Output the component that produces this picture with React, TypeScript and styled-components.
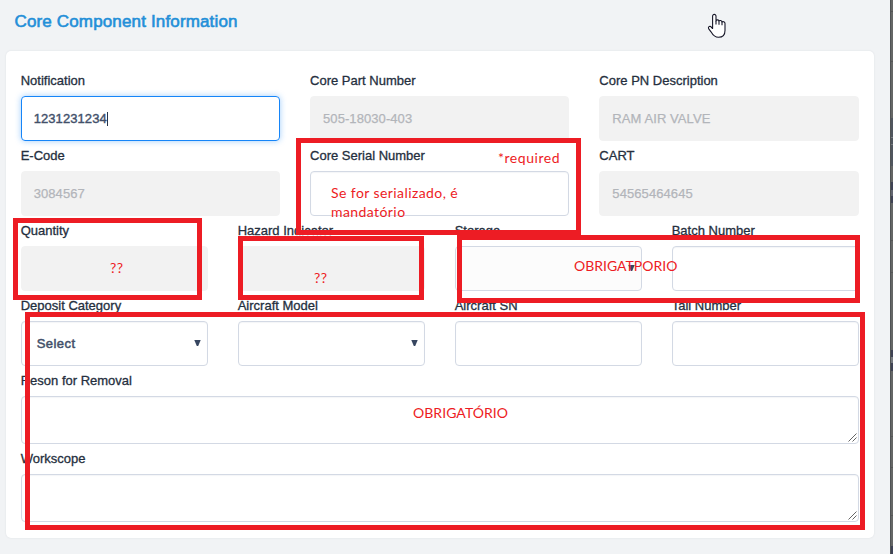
import React from 'react';
import styled, { createGlobalStyle, css } from 'styled-components';

const GlobalStyle = createGlobalStyle`
  * { box-sizing: border-box; }
  body { margin: 0; overflow: hidden; background: #f1f3f5; }
`;

const Page = styled.div`
  position: relative;
  display: flex;
  width: 893px;
  height: 554px;
  overflow: hidden;
  background: #f1f3f5;
  font-family: 'Liberation Sans', Arial, sans-serif;
`;

const Main = styled.main`
  display: flex;
  flex-direction: column;
  flex: 1;
  padding: 0 16px 16px 6px;
`;

const Title = styled.h1`
  flex: none;
  height: 51px;
  margin: 0;
  padding: 11px 0 0 8.5px;
  font-size: 17px;
  line-height: 21px;
  font-weight: 400;
  letter-spacing: 0.15px;
  color: #238fd8;
  -webkit-text-stroke: 0.6px #238fd8;
`;

const Card = styled.form`
  display: flex;
  flex: 1;
  flex-direction: column;
  gap: 6px;
  padding: 21px 15.3px 0 14.7px;
  border-radius: 5px;
  background: #fff;
  box-shadow: 0 0 2px rgba(30, 50, 70, 0.1);
`;

const Row = styled.div<{ $columns: number }>`
  display: grid;
  grid-template-columns: repeat(${(p) => p.$columns}, 1fr);
  column-gap: 30px;
`;

const Field = styled.label`
  display: flex;
  flex-direction: column;
`;

const Label = styled.span`
  height: 24px;
  font-size: 13px;
  line-height: 18px;
  letter-spacing: 0;
  white-space: nowrap;
  color: #252f3e;
  -webkit-text-stroke: 0.3px #252f3e;
`;

type Kind = 'plain' | 'disabled' | 'focused' | 'tinted';

const kinds = {
  plain: css`
    background: #fff;
    box-shadow: inset 0 1px 1px rgba(40, 60, 90, 0.05);
  `,
  tinted: css`
    background: #fcfcfc;
  `,
  disabled: css`
    border-color: #f2f2f2;
    background: #f2f2f2;
    color: #b2b5ba;
    -webkit-text-stroke: 0.25px #b2b5ba;
  `,
  focused: css`
    border-color: #1685f8;
    box-shadow: 0 0 6px rgba(22, 133, 248, 0.4);
  `,
};

const Control = styled.div<{ $kind: Kind; $select: boolean }>`
  display: flex;
  align-items: center;
  height: 45px;
  padding: 0 6px 0 ${(p) => (p.$select ? 15 : 12)}px;
  border: 1px solid #d3d9e4;
  border-radius: 4px;
  font-size: 13px;
  letter-spacing: 0.08px;
  color: #42506a;
  -webkit-text-stroke: 0.4px #42506a;
  ${(p) => kinds[p.$kind]}
`;

const SelectText = styled.span`
  flex: 1;
  letter-spacing: 0.45px;
  -webkit-text-stroke-width: 0.5px;
`;

const Caret = styled.span`
  width: 1px;
  height: 14px;
  background: #26344a;
`;

const Arrow = styled.svg`
  width: 7px;
  height: 6px;
  margin-bottom: 2px;
`;

const TextArea = styled.div`
  display: flex;
  align-items: flex-end;
  justify-content: flex-end;
  height: 48px;
  padding: 0 1px 1px 0;
  border: 1px solid #d3d9e4;
  border-radius: 4px;
  box-shadow: inset 0 1px 1px rgba(40, 60, 90, 0.05);
`;

const Grip = () => (
  <svg width="9" height="9" viewBox="0 0 9 9" stroke="#555" strokeWidth="0.9">
    <path d="M0.5 8.5 8.5 0.5M4.5 8.5 8.5 4.5" />
  </svg>
);

/* Sliver of the dimmed page behind the panel. */
const Backdrop = styled.aside`
  display: flex;
  flex-direction: column;
  width: 3px;
  overflow: hidden;
  border-left: 1px solid #505355;
  background: #636564;
`;

const Band = styled.div<{ $h: number; $c: string }>`
  flex: none;
  height: ${(p) => p.$h}px;
  background: ${(p) => p.$c};
`;

const bands: [number, string][] = [
  [11, '#656766'], [1, '#535555'], [49, '#656766'], [1, '#555757'],
  [56, '#656766'], [19, '#50565e'], [1, '#777b80'], [6, '#50565e'], [1, '#777b80'], [21, '#50565e'],
  [16, '#646564'], [8, '#3f4354'], [6, '#62656f'], [7, '#3f4354'],
  [37, '#656766'], [1, '#555757'], [31, '#656766'], [1, '#555757'],
  [77, '#656766'], [7, '#3f4354'], [6, '#777b80'], [8, '#3f4354'],
  [65, '#656766'], [1, '#555757'], [30, '#656766'], [1, '#555757'],
  [47, '#656766'], [1, '#555757'], [30, '#656766'], [8, '#3f4354'],
];

/* Free-form review markup drawn over the form. */
const MarkBox = styled.div<{ $x: number; $y: number; $w: number; $h: number }>`
  position: absolute;
  left: ${(p) => p.$x}px;
  top: ${(p) => p.$y}px;
  width: ${(p) => p.$w}px;
  height: ${(p) => p.$h}px;
  border: 5px solid #ed1c24;
`;

const Note = styled.div<{ $x: number; $y: number; $track: number }>`
  position: absolute;
  left: ${(p) => p.$x}px;
  top: ${(p) => p.$y}px;
  font-family: Lato, 'Open Sans', sans-serif;
  font-size: 14px;
  letter-spacing: ${(p) => p.$track}px;
  line-height: 19px;
  white-space: pre;
  color: #ed1c24;
`;

const Pointer = styled.svg`
  position: absolute;
  left: 707px;
  top: 13px;
  width: 20px;
  height: 26px;
`;

type FieldData = { label: string; value?: string; kind?: Kind; select?: boolean };

const rows: FieldData[][] = [
  [
    { label: 'Notification', value: '1231231234', kind: 'focused' },
    { label: 'Core Part Number', value: '505-18030-403', kind: 'disabled' },
    { label: 'Core PN Description', value: 'RAM AIR VALVE', kind: 'disabled' },
  ],
  [
    { label: 'E-Code', value: '3084567', kind: 'disabled' },
    { label: 'Core Serial Number' },
    { label: 'CART', value: '54565464645', kind: 'disabled' },
  ],
  [
    { label: 'Quantity', kind: 'disabled' },
    { label: 'Hazard Indicator', kind: 'disabled' },
    { label: 'Storage', kind: 'tinted', select: true },
    { label: 'Batch Number' },
  ],
  [
    { label: 'Deposit Category', value: 'Select', select: true },
    { label: 'Aircraft Model', select: true },
    { label: 'Aircraft SN' },
    { label: 'Tail Number' },
  ],
];

const boxes = [
  { x: 13, y: 218, w: 189, h: 82 },
  { x: 238, y: 236, w: 186, h: 64 },
  { x: 296, y: 138, w: 285, h: 97 },
  { x: 457, y: 235, w: 403, h: 68 },
  { x: 25, y: 312, w: 840, h: 218 },
];

const notes = [
  { x: 498, y: 148, text: '*required', track: 0.55 },
  { x: 331, y: 183, text: 'Se for serializado, é\nmandatório', track: 0.42 },
  { x: 110, y: 258, text: '??', track: 0.6 },
  { x: 314, y: 268, text: '??', track: 0.6 },
  { x: 574, y: 256, text: 'OBRIGATPORIO', track: 0 },
  { x: 413, y: 403, text: 'OBRIGATÓRIO', track: 0.05 },
];

const FormField = ({ label, value, kind = 'plain', select = false }: FieldData) => (
  <Field>
    <Label>{label}</Label>
    <Control $kind={kind} $select={select}>
      {select ? <SelectText>{value}</SelectText> : value}
      {kind === 'focused' && <Caret />}
      {select && (
        <Arrow viewBox="0 0 7 6">
          <path d="M0.3 0H6.7L4.2 6H2.8Z" fill="#374660" />
        </Arrow>
      )}
    </Control>
  </Field>
);

export default function App() {
  return (
    <Page>
      <GlobalStyle />
      <Main>
        <Title>Core Component Information</Title>
        <Card>
          {rows.map((fields, i) => (
            <Row key={i} $columns={fields.length}>
              {fields.map((f) => (
                <FormField key={f.label} {...f} />
              ))}
            </Row>
          ))}
          {['Reson for Removal', 'Workscope'].map((label) => (
            <Field key={label}>
              <Label>{label}</Label>
              <TextArea>
                <Grip />
              </TextArea>
            </Field>
          ))}
        </Card>
      </Main>
      <Backdrop>
        {bands.map(([h, c], i) => (
          <Band key={i} $h={h} $c={c} />
        ))}
      </Backdrop>

      {boxes.map((b, i) => (
        <MarkBox key={i} $x={b.x} $y={b.y} $w={b.w} $h={b.h} />
      ))}
      {notes.map((n, i) => (
        <Note key={i} $x={n.x} $y={n.y} $track={n.track}>
          {n.text}
        </Note>
      ))}

      <Pointer viewBox="0 0 20 26">
        <path
          d="M5.6 15.5V3.2C5.6 0.8 9 0.8 9 3.2V8C9.2 6.4 12 6.6 12 8.2C12.3 7 15 7.2 15 9.2C15.6 8.2 18 8.6 18 10.6V17.5C18 21.5 15.6 24.3 11.5 24.3C7.3 24.3 5.4 21.3 4 18.8L1.6 15.6C0.8 13.7 3.1 12.6 4.2 14Z"
          fill="#fff"
          stroke="#171728"
          strokeWidth="1.1"
          strokeLinejoin="round"
        />
        <path d="M9 8V11.6M12 8.2V11.8M15 9.2V12.2" stroke="#171728" strokeWidth="1.1" />
      </Pointer>
    </Page>
  );
}
